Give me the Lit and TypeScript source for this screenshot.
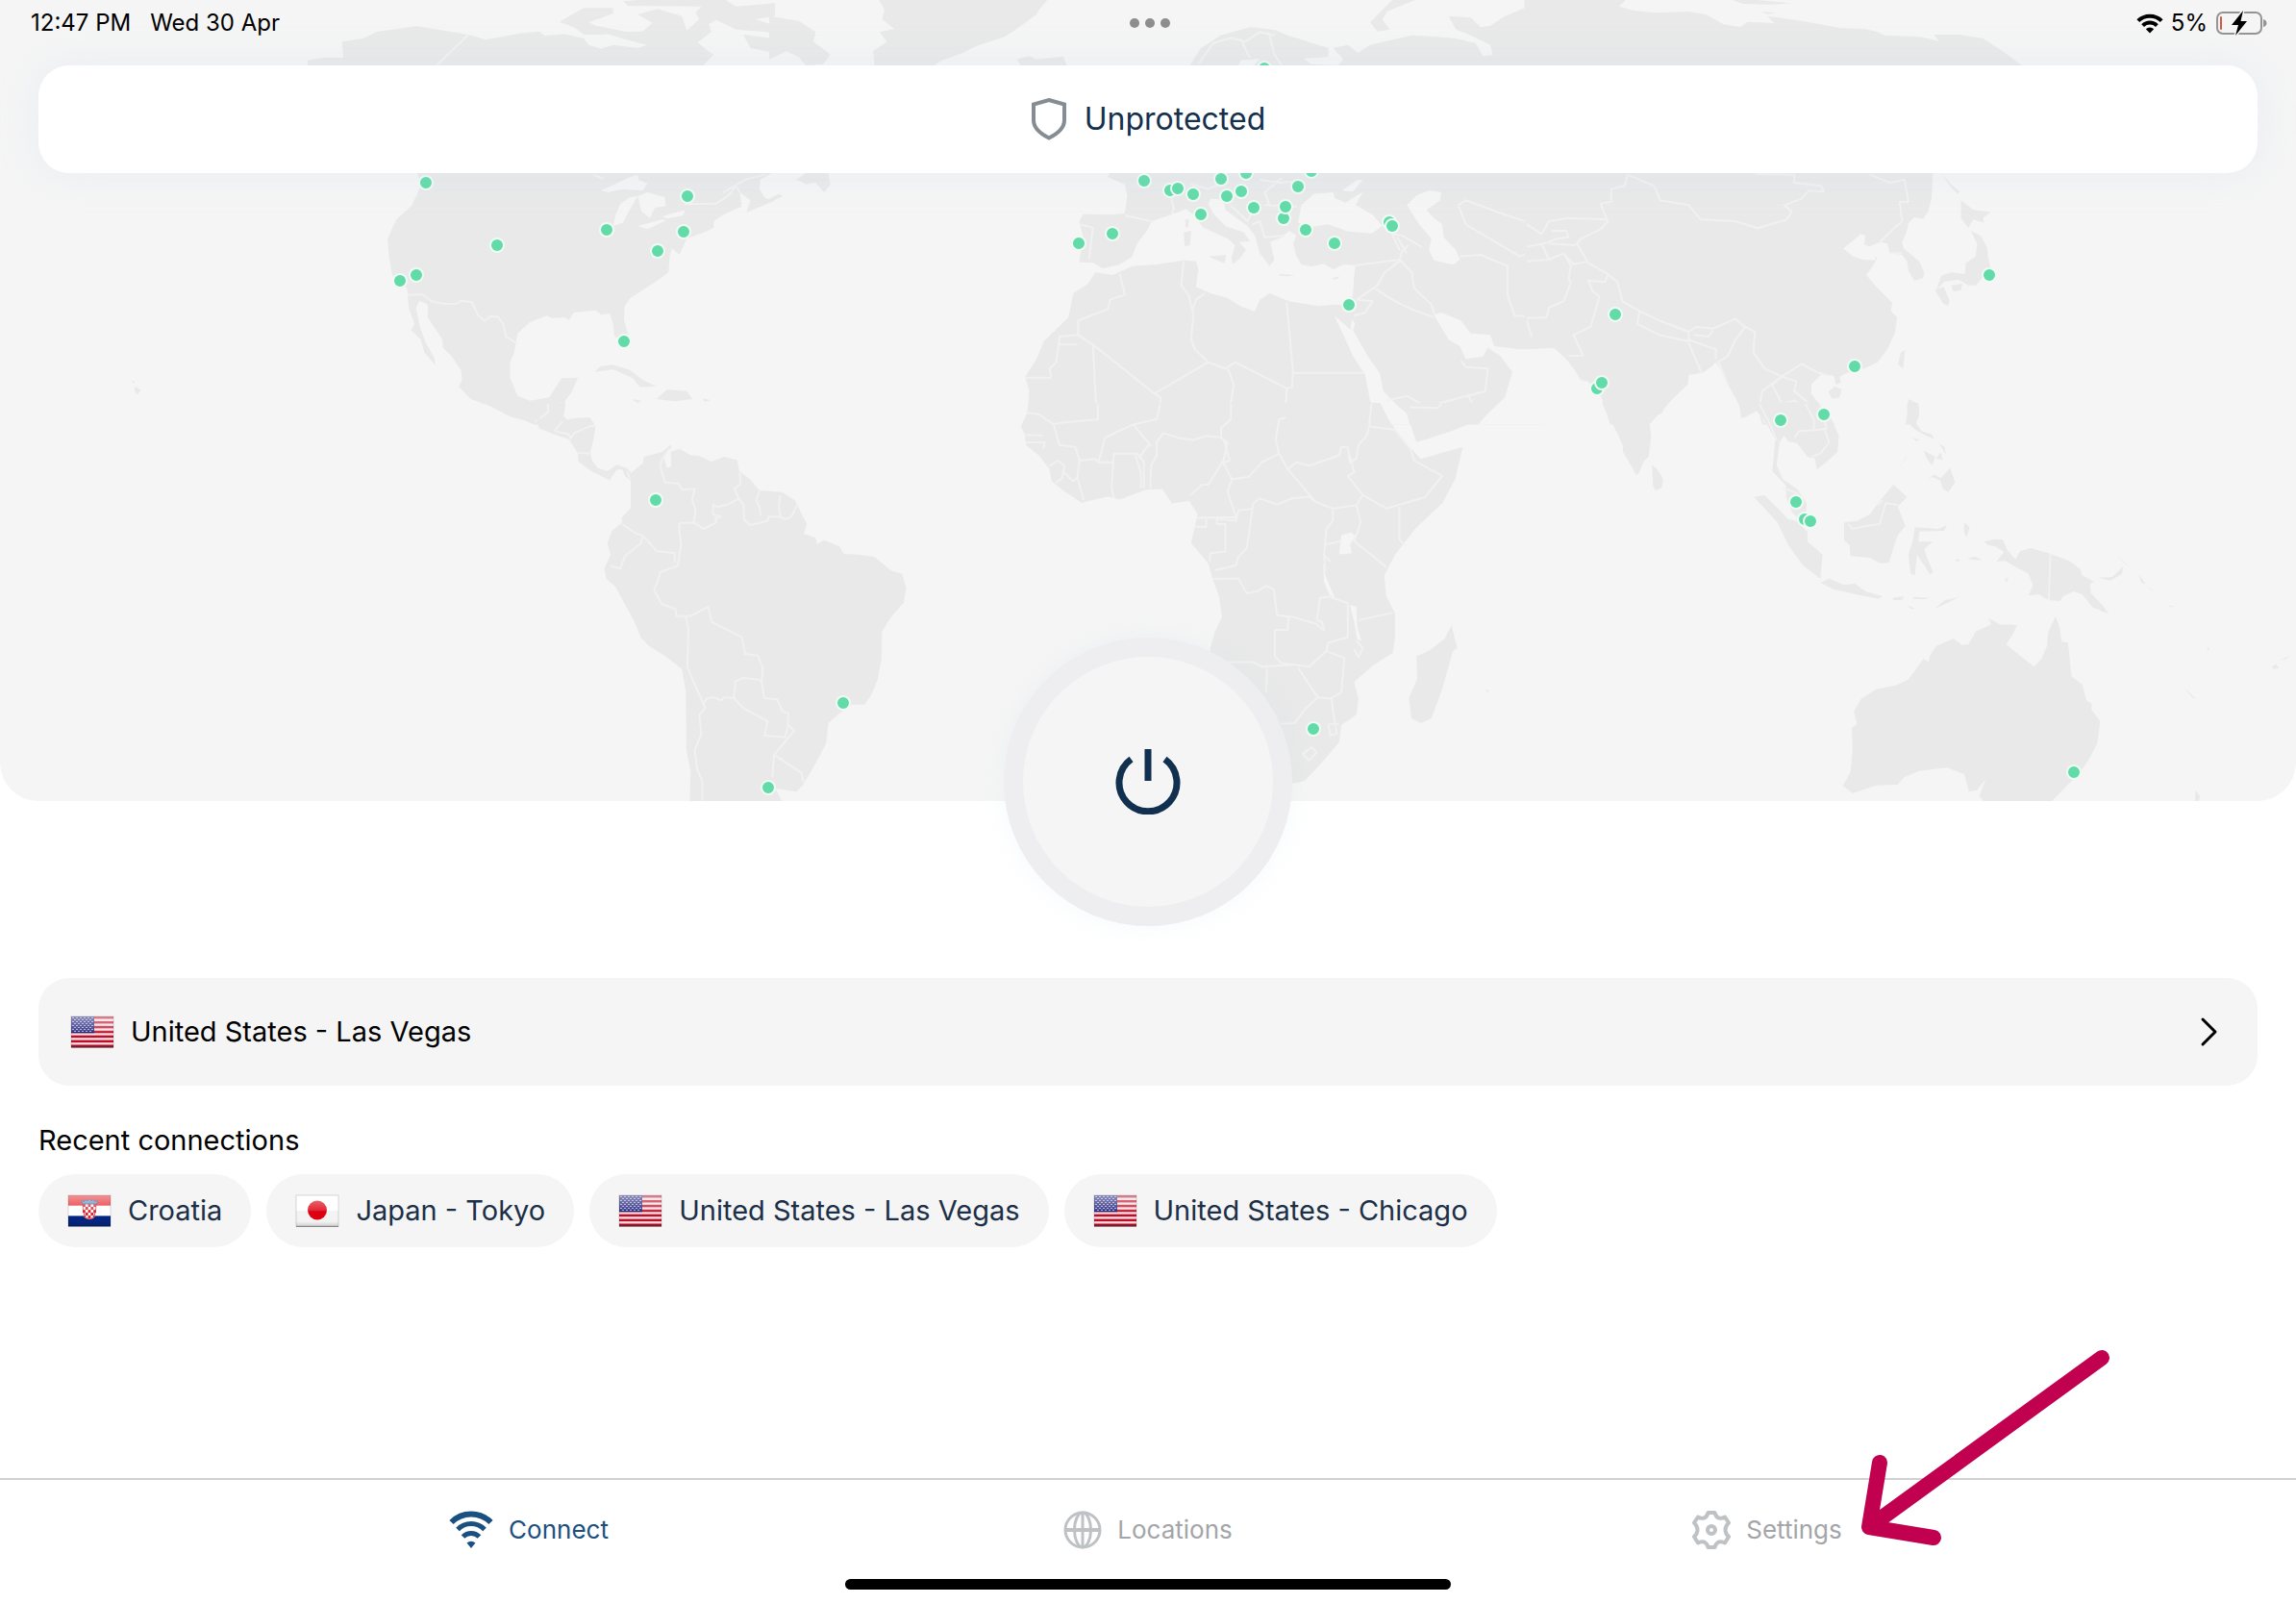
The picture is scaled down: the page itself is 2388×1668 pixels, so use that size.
import { LitElement, html, css, svg, nothing } from "lit";
import { customElement, property, state } from "lit/decorators.js";

type FlagCode = "us" | "hr" | "jp";

interface Place {
  flag: FlagCode;
  name: string;
}

interface Sheet {
  transform: string;
  land: string;
  water: string;
  borders: string;
}

/* The world map is stored as six sheets, each in its own units. */
const SHEETS: Sheet[] = [
  {
    transform: "scale(.5102 .3333)",
    land: `M627,210L627,188 660,180 700,180 697,130 740,120 770,98 850,82 905,95 955,108 990,124 1060,104 1100,98 1110,112 1150,106 1190,120 1200,140 1225,152 1250,140 1300,150 1330,134 1370,148 1420,130 1440,155 1455,170 1430,210Z
      M1140,68L1190,25 1250,25 1250,42 1200,70 1215,80 1275,98 1230,108 1190,108 1170,85Z
      M1225,100L1310,98 1330,72 1300,45 1340,28 1390,50 1400,95 1425,60 1418,38 1430,20 1280,18 1270,4 1300,0 1480,0 1500,20 1580,10 1580,50 1540,60 1580,80 1580,102 1500,92 1460,62 1445,75 1450,100 1420,135 1390,150 1330,145 1280,125Z
      M1515,108L1580,120 1580,165 1530,150Z
      M850,535L858,580 840,640 808,685 790,745 793,800 800,860 830,900 833,960 845,1010 838,1030 858,1060 865,1100 888,1140 885,1115 868,1070 856,1020 848,960 855,938 872,950 872,990 885,1020 902,1060 903,1085 920,1110 940,1155 942,1185 935,1205 960,1245 1000,1268 1040,1300 1065,1310 1090,1325 1212,1325 1195,1305 1155,1310 1145,1290 1152,1250 1165,1225 1178,1178 1145,1180 1130,1215 1120,1240 1080,1250 1055,1235 1040,1180 1040,1130 1048,1100 1055,1040 1080,1005 1115,985 1125,992 1150,990 1160,998 1170,975 1215,968 1225,982 1243,978 1250,1010 1252,1045 1270,1080 1282,1070 1280,1040 1272,1000 1273,955 1285,930 1310,905 1345,870 1363,850 1365,800 1370,775 1385,795 1400,745 1440,722 1455,710 1455,690 1480,665 1512,645 1508,600 1530,625 1522,662 1550,645 1580,625 1560,618 1548,590 1550,560 1580,535Z
      M1212,1160L1225,1142 1250,1138 1285,1155 1310,1185 1338,1205 1305,1208 1290,1180 1250,1152Z
      M1338,1245L1360,1215 1400,1220 1412,1245 1375,1252Z
      M1288,1245L1308,1250 1300,1258Z M1433,1243L1448,1248 1436,1254Z
      M276,1205L287,1217 279,1232 274,1217Z M268,1186L276,1192 271,1196Z`,
    water: `M1225,595L1280,555 1300,545 1302,562 1320,572 1310,595 1270,590 1240,600Z
      M1250,705L1255,670 1265,635 1285,615 1300,612 1285,650 1270,695Z
      M1300,612L1320,600 1355,615 1357,643 1335,648 1325,680 1308,660Z
      M1300,705L1350,685 1358,688 1320,715Z M1350,675L1397,655 1392,673 1360,682Z`,
    borders: `M830,920L860,918 880,940 905,948 930,948 940,938 962,942 975,985 988,1000 1000,987 1015,988 1025,1010 1032,1050 1055,1073
      M955,108L890,204 M1210,545L1230,558 M1395,637L1460,635 1485,610 1500,580 1508,600 M1475,600L1520,560 1560,545
      M1090,1315L1115,1290 1118,1262 1145,1258 M1105,1320L1120,1300 1145,1292`,
  },
  {
    transform: "translate(800 0) scale(.5102 .3333)",
    land: `M222,-5L570,-5 550,30 545,45 500,95 480,115 420,145 395,165 350,190 330,210 215,210 212,160 240,130 225,100 255,90 230,60 235,30Z
      M0,50L60,65 95,100 90,130 125,170 110,200 75,204 60,178 35,160 0,185Z
      M505,185L530,175 545,185 600,176 608,210 515,210Z
      M855,210L880,150 920,110 980,85 1030,93 1060,112 1140,150 1140,178 1090,182 1105,200 1160,204 1170,185 1150,150 1180,140 1200,165 1225,140 1310,110 1360,115 1400,120 1440,135 1455,175 1475,172 1470,140 1430,110 1400,92 1385,50 1430,55 1450,85 1470,80 1500,50 1580,0 1580,210Z
      M1225,70L1270,0 1325,-5 1260,35 1250,60 1265,92 1240,98Z
      M695,535L690,552 725,575 730,610 725,665 700,670 640,668 632,690 640,740 632,818 660,820 680,838 715,825 740,800 750,760 770,720 780,690 815,672 850,652 865,670 885,710 935,745 950,765 942,805 945,825 960,805 972,780 958,755 980,752 968,725 930,705 905,665 895,635 900,620 925,622 930,655 975,705 990,735 1000,790 1020,830 1030,810 1025,780 1022,755 1045,740 1060,720 1075,735 1068,760 1075,800 1085,825 1105,832 1130,823 1150,840 1172,825 1195,828 1192,870 1190,920 1180,955 1182,1325 1580,1325 1580,535Z
      M895,800L932,795 928,822Z M845,725L860,720 858,765 847,768Z M848,685L856,685 854,712 849,708Z
      M1040,855L1072,858 1060,862 1040,860Z M1145,868L1165,862 1155,872Z
      M55,560L75,540 120,540 125,575 112,600 95,570 75,575Z M0,620L20,605 28,612 0,632Z
      M1185,952L1150,950 1120,955 1060,940 1020,915 1000,935 990,972 960,955 935,930 900,915 870,895 875,840 870,815 845,812 790,825 740,830 700,858 665,850 650,885 620,915 610,990 580,1035 560,1065 545,1120 522,1175 530,1220 525,1325 1320,1325 1240,1100Z`,
    water: `M955,210L962,188 1000,183 985,210Z
      M1078,695L1085,640 1110,605 1150,600 1153,618 1175,632 1195,612 1210,600 1195,640 1230,670 1250,705 1228,728 1180,722 1140,700 1105,708Z
      M1168,595L1200,560 1210,562 1190,598Z
      M1300,640L1320,610 1345,593 1370,600 1368,625 1340,655 1355,680 1372,700 1375,740 1400,780 1408,810 1395,826 1355,812 1345,780 1350,745 1325,700Z
      M1152,985L1172,1010 1185,1028 1188,995 1194,1010 1190,1030 1220,1110 1245,1165 1252,1220 1280,1265 1300,1290 1306,1325 1258,1325 1225,1250 1215,1170 1190,1110 1175,1060Z
      M1355,982L1370,975 1410,1000 1430,1040 1470,1045 1478,1080 1530,1090 1580,1085 1580,1325 1445,1325 1465,1290 1500,1240 1515,1160 1490,1110 1465,1085 1455,1112 1420,1120 1408,1080 1385,1060Z`,
    borders: `M715,855L725,920 695,935 690,965 630,1000 630,1045 592,1050 590,1075 628,1075 M630,1045L660,1075 785,1228 895,1130 868,1090 860,1060 865,980 855,920 840,890 845,815 M888,915L870,935 862,970
      M575,1178L524,1178 M590,1075L585,1130 572,1150 575,1178 M660,1075L668,1310 610,1320 M785,1228L798,1240 795,1300 765,1320
      M895,1130L930,1150 950,1130 1055,1212 1052,1320 M935,1150L947,1200 942,1250 915,1320 M1055,945L1068,1163 1215,1163 M1068,1163L1066,1208 1055,1212
      M632,700L660,710 652,810 M725,672L785,692 M820,672L825,650 820,620 M1000,560L1040,570 1078,565 M1045,555L1010,600 1020,640 M1010,640L1075,645
      M985,700L1000,690 1010,740 1050,735 M940,640L975,690 985,660 M860,575L895,590 920,575 M1285,780L1270,730 1290,735 1330,770 M1280,740L1300,790
      M1195,828L1285,810 1290,785 1302,765 M1285,810L1310,850 1315,900 1350,950 1357,985 M1285,815L1255,850 1240,890 1198,935 M1235,900L1270,935 1310,965 1355,990 M1192,985L1215,975 1230,940 1198,935
      M1408,800L1450,795 1505,830 1505,920 1520,985 1568,990 M1405,640L1420,625 1500,670 1560,700 M1405,640L1420,700 1530,800 1568,780 M1258,1250L1300,1235 1340,1270 1410,1240 1460,1220 M1410,1125L1420,1145 1465,1150 1460,1220 1425,1235 1440,1275
      M875,200L905,135 940,118 970,130 1000,100 1030,110 M960,120L980,180 M1018,100L1030,170 1045,204`,
  },
  {
    transform: "translate(1588 0) scale(.5102 .3333)",
    land: `M-5,-5L205,-5 188,20 215,32 260,40 330,36 365,45 400,75 435,85 450,68 505,72 490,50 560,65 640,88 690,90 715,100 730,110 800,115 840,128 830,108 880,108 930,120 970,160 1015,210 -5,210Z
      M420,0L470,0 540,10 500,14 440,12Z M478,36L508,40 490,44Z
      M-5,535L828,535 825,620 818,660 808,683 790,678 778,695 775,720 765,755 768,775 800,815 810,850 808,868 790,875 778,845 775,815 765,795 740,790 735,760 720,755 700,768 690,790 715,805 705,830 692,858 710,890 745,945 742,970 755,990 750,1040 735,1090 715,1130 690,1148 650,1165 638,1175 640,1195 630,1200 626,1172 600,1168 580,1200 580,1230 600,1268 628,1325 480,1325 472,1280 440,1305 432,1260 410,1200 398,1160 385,1130 375,1145 360,1162 330,1170 328,1200 300,1240 270,1290 250,1325 170,1325 150,1230 125,1190 110,1185 98,1155 80,1120 55,1085 -5,1090Z
      M885,625L910,655 945,662 930,680 932,695 910,685 900,712 885,680Z M905,720L925,735 938,770 940,800 948,850 930,865 915,890 900,890 880,872 850,880 835,905 845,860 865,850 893,855 895,820 915,800 918,760Z
      M832,905L850,895 862,940 858,955 848,945Z M865,890L888,885 885,905 870,910Z M845,540L865,575 882,598 878,605 862,580Z
      M762,1100L771,1092 767,1150 757,1138Z M615,1222L628,1205 642,1215 637,1240 622,1244Z M778,1245L798,1260 800,1290 790,1325 772,1325 776,1290Z`,
    water: `M645,775L670,745 680,730 690,735 688,762 705,775 712,812 685,810 665,800Z`,
    borders: `M205,545L260,580 272,625 330,640 355,685 425,690 470,712 530,685 540,660 525,640 560,620 575,595 605,598 600,580 545,570 545,545 465,542
      M205,545L200,580 172,590 172,630 150,635 165,690 150,715 110,745 102,760 125,820 160,850 185,880 195,940 230,970 225,1010 270,1045 330,1065 330,1035 270,1000 230,970 M330,1035L345,1020 380,1025 425,995 445,1020 465,1035 462,1100 485,1150 520,1175 560,1135 590,1160 610,1170
      M700,545L740,570 770,560 778,630 760,630 765,690 750,710 720,755 M738,790L765,790 M0,700L30,730 45,690 85,680 165,685 M45,760L100,765 M50,720L80,720 85,740 60,745 35,760 0,770
      M30,760L45,810 0,815 M45,810L75,790 90,830 85,870 90,880 75,940 45,960 40,990 0,992 M75,790L95,825 125,815 M165,855L160,880 125,875 135,910 148,925 130,1020 95,1045 115,1110 85,1110 M0,1000L10,1050 M330,1070L355,1160 M330,1060L385,1090 385,1120 M380,1030L370,1050 340,1045 M445,1020L425,1060 410,1110 390,1130 410,1200
      M520,1175L480,1220 475,1260 485,1320 M520,1175L500,1200 520,1260 545,1250 565,1265 570,1320 M520,1175L550,1190 545,1220 580,1265 600,1320`,
  },
  {
    transform: "translate(560 420) scale(.3333)",
    land: `M-5,-3L85,-3 80,30 70,55 110,45 160,42 178,70 172,110 162,152 168,178 185,200 215,210 245,190 275,200 290,215 325,185 330,165 385,150 412,128 415,135 392,165 400,200 415,195 412,150 440,140 475,160 500,162 540,180 580,165 620,175 627,210 660,235 690,270 760,275 800,300 820,340 838,375 828,405 865,418 870,438 890,425 940,445 952,468 1000,470 1050,478 1100,520 1135,530 1148,575 1140,620 1100,665 1072,710 1070,800 1058,860 1040,905 1018,938 980,938 940,965 905,995 898,1060 860,1130 825,1190 805,1210 740,1200 762,1245 472,1245 475,1150 462,1080 460,900 448,828 400,790 345,755 320,730 300,680 240,570 212,545 205,515 225,470 215,435 230,395 262,370 260,355 288,325 288,240 270,225 262,205 245,205 222,238 165,210 125,180 122,152 95,110 50,95 5,78 -5,60Z`,
    water: ``,
    borders: `M5,45L30,25 30,0 M50,85L75,55 M50,85L95,95 100,108 110,92 160,70 178,68 M122,152L160,155 M285,235L278,210
      M408,140L385,175 380,195 395,245 435,248 450,268 488,265 480,300 490,330 485,370 515,390 555,370 552,358 570,352 545,345 545,315 560,322 595,312 625,295 612,265 630,250 628,215
      M625,295L640,315 642,360 660,378 715,365 718,352 750,352 775,360 790,350 810,310 M690,272L680,300 690,325 695,350 M755,285L750,320 755,352
      M485,370L440,372 440,395 445,440 435,505 380,525 372,555 360,580 385,625 428,640 430,662 475,662 530,633 540,680 590,705 635,728 645,780 685,785 700,825 697,870 705,918 745,922 762,960 780,965 778,1000 798,1020 735,1095 820,1150 828,1180 M735,1095L730,1165
      M262,375L300,402 325,410 320,435 270,475 255,515 225,505 M325,410L370,460 425,465 425,495 M460,665L468,700 465,820 485,870 515,935 525,920 545,915 570,925 580,915 610,918 615,865 640,855 690,860 697,870 M610,918L640,950 715,990 705,1035 770,1040 780,1000
      M515,935L520,950 502,970 508,1030 488,1080 495,1140 512,1180 512,1242`,
  },
  {
    transform: "translate(1000 420) scale(.4464 .3571)",
    land: `M158,-3L152,30 138,65 148,90 150,120 180,150 205,190 210,225 240,255 280,288 340,270 370,278 430,250 468,248 490,290 530,282 550,320 545,350 535,405 575,465 585,510 600,560 607,620 590,665 580,710 580,760 720,1110 775,1105 800,1098 850,1030 880,985 885,935 920,905 925,860 915,810 960,760 1005,725 1010,680 1010,610 990,560 985,500 1010,440 1060,360 1120,290 1150,220 1168,125 1070,160 1040,120 1000,55 975,-3Z
      M1030,-3L1060,112 1140,80 1180,60 1185,35 1225,15 1230,-3Z M1142,645L1155,712 1145,720 1120,830 1095,915 1070,930 1048,915 1043,855 1062,800 1060,735 1090,718 1125,685Z M1492,-3L1530,90 1572,210 1572,-3Z
      M1222,830L1230,835 1224,840Z`,
    water: `M885,382L908,374 918,385 905,410 910,435 880,438Z M842,460L848,500 870,565 862,568 845,520Z M905,585L920,590 922,650 932,690 922,685 914,630Z`,
    borders: `M150,25L180,30 215,60 230,55 318,45 318,0 M215,60L228,120 265,125 275,165 310,160 320,170 355,170 M150,90L190,92 M150,112L195,112 190,130 M205,180L225,165 240,180 235,215 220,230 M240,200L260,225 270,215 275,165 M270,215L285,280 M355,145L350,245 355,275 M355,145L410,145 415,155 432,125 440,120 400,60 365,80 335,98 320,165 M400,60L455,45 463,0 M405,150L418,200 418,245 M425,245L425,170 410,145 M440,245L442,180 455,150 455,110 470,85 510,100 540,105 570,93 605,98 620,115 610,165 575,235 560,235 535,265
      M605,98L605,70 628,45 628,0 M610,100L625,165 610,170 630,220 620,255 640,330 548,332 M630,220L670,212 700,170 740,145 732,105 740,45 755,40 M740,145L760,190 825,285 810,270 770,275 735,293 695,275 680,290 678,305 645,310 640,340 595,335 595,350 615,350 615,430 580,435 578,460 M545,358L570,358 570,335
      M760,190L780,170 810,180 880,150 885,125 900,125 905,170 920,160 925,120 945,90 950,65 975,70 1010,75 1045,130 1055,165 1120,210 1080,272 1030,290 990,305 935,265 900,210 915,200 905,150 M950,65L955,0 M1020,300L1020,395 1035,412 M825,285L865,305 920,295 935,265 M920,295L930,345 915,400 990,475 M865,305L865,340 850,365 845,440 848,490 M845,410L885,400 M845,440L860,460
      M678,305L665,420 645,445 640,470 590,485 M585,510L645,508 665,552 690,545 710,530 728,540 735,615 770,620 825,640 845,660 840,635 828,630 835,565 865,560 M735,615L762,620 760,658 730,658 730,735 745,755 810,765 850,720 892,740 885,840 860,858 830,855 785,770 M865,565L900,580 900,680 855,695 850,720 M925,630L1005,608 M920,690L935,710 925,738 915,715
      M620,752L680,752 700,765 770,760 M712,770L710,840 M830,855L800,890 775,930 745,932 M862,858L870,930 880,935 M855,935L870,930 875,960 860,965Z M795,1020L815,1000 828,1015 810,1038Z M1045,10L1110,12 1118,0`,
  },
  {
    transform: "translate(1688 420) scale(.4464 .3333)",
    land: `M-3,-3L105,-3 90,30 60,42 66,100 60,165 48,180 35,222 20,195 0,150Z M68,190L80,205 94,235 90,262 76,270 70,255Z
      M272,-5L275,45 310,20 330,50 355,110 348,210 380,255 380,290 395,340 425,378 428,310 405,265 372,235 358,190 365,120 375,98 385,118 405,122 430,165 447,170 452,205 475,180 500,150 503,100 485,45 455,-5Z
      M305,290L330,285 360,325 385,360 405,365 430,400 430,430 465,470 460,545 420,505 385,440 360,370Z M460,558L480,545 515,565 540,560 565,585 605,600 595,608 545,595 490,578Z
      M515,370L545,365 575,345 600,300 630,252 662,290 640,320 658,380 640,410 630,450 620,495 600,498 575,480 530,475 528,440 515,425Z
      M680,385L735,390 755,378 748,396 690,398 688,430 722,430 702,452 710,485 723,525 715,532 700,500 685,470 680,535 670,530 665,470 675,430Z
      M795,370L808,385 800,418 795,400Z M628,605L655,600 650,612 630,612Z M675,602L715,605 700,610 678,608Z M725,640L750,612 782,603 745,628Z M660,628L680,638 672,640Z M773,486L785,484 780,494Z M802,482L820,476 838,488 815,486Z M890,545L898,542 893,560Z
      M662,-3L688,-3 690,35 683,60 695,85 720,95 725,110 700,95 675,75 663,50Z M640,208L662,160 658,172Z M675,105L690,112 684,118Z M735,122L750,135 752,158 745,140Z M700,145L728,165 720,192 708,170Z M740,150L745,175 730,170Z M706,240L725,220 740,232 762,200 774,245 758,275 745,265 740,240 720,228Z
      M842,430L865,422 885,424 895,455 915,485 925,460 950,450 990,465 1040,490 1065,515 1070,535 1098,555 1088,562 1090,590 1115,625 1132,655 1095,635 1070,595 1050,585 1025,600 1018,615 990,612 970,595 945,598 955,565 945,530 890,490 870,492 888,462 868,445 850,440Z
      M1108,542L1140,540 1165,508 1163,530 1135,552Z M1150,470L1178,508 1170,500Z M1202,532L1218,562 1208,558Z M1222,570L1240,585 1230,580Z M1272,628L1286,634 1275,634Z M1303,880L1335,920 1328,918Z M1512,820L1522,812 1528,824 1516,827Z M1530,800L1555,785 1545,796Z M1360,760L1368,765 1362,768Z
      M852,668L878,688 918,690 910,715 893,750 920,780 958,820 975,795 988,755 990,715 1008,662 1018,700 1022,742 1037,745 1045,850 1070,875 1080,925 1092,935 1092,955 1112,990 1105,1060 1085,1110 1070,1140 1050,1170 995,1245 845,1245 830,1225 845,1170 825,1205 805,1210 803,1190 795,1155 755,1135 690,1145 655,1165 640,1188 590,1190 535,1215 512,1192 530,1150 535,1080 533,1010 545,1000 538,960 555,920 590,890 635,878 665,860 700,795 712,805 715,785 730,755 770,732 790,752 805,750 822,710 858,688Z
      M1333,1205L1345,1225 1338,1245 1333,1245Z`,
    water: ``,
    borders: `M318,0L345,70 358,115 M400,105L410,85 450,82 470,78 480,120 460,155 440,165 M425,0L445,50 445,80 M460,0L475,80 M525,375L535,390 570,380 598,375 612,310 640,315 M595,315L605,300 M996,468L992,612 M372,262L408,280`,
  },
];

/* Server positions on the map, in map units. */
const PINS: [number, number][] = [
  [443, 190], [715, 204], [631, 239], [711, 241], [517, 255], [684, 261], [416, 292], [433, 286], [649, 355],
  [1315, 71], [1190, 188], [1217, 198], [1225, 196], [1241, 202], [1270, 186], [1296, 180], [1276, 204], [1291, 199],
  [1304, 216], [1249, 223], [1350, 194], [1364, 178], [1335, 227], [1337, 215], [1358, 239], [1388, 253], [1157, 243],
  [1122, 253], [1445, 231], [1448, 235], [1403, 317], [2069, 286], [1680, 327], [1661, 404], [1666, 398], [1929, 381],
  [1897, 431], [1852, 437], [682, 520], [877, 731], [799, 819], [1366, 758], [1868, 522], [1877, 540], [1883, 542],
  [2157, 803],
];

@customElement("world-map")
class WorldMap extends LitElement {
  static styles = css`
    :host { display: block; }
    .map { display: block; width: 100%; height: auto; }
    .land { fill: #e9e9e9; }
    .water { fill: #f5f5f5; }
    .border { fill: none; stroke: #f1f1f1; stroke-width: 2; stroke-linejoin: round; vector-effect: non-scaling-stroke; }
    .pin { fill: #62dba8; stroke: #effbf5; stroke-width: 2; }
  `;

  render() {
    return html`
      <svg class="map" viewBox="0 0 2388 833" role="img" aria-label="Server map">
        ${SHEETS.map(
          (s) => svg`<g transform=${s.transform}>
            <path class="land" d=${s.land}></path>
            ${s.water ? svg`<path class="water" d=${s.water}></path>` : nothing}
            <path class="border" d=${s.borders}></path>
          </g>`,
        )}
        ${PINS.map(([x, y]) => svg`<circle class="pin" cx=${x} cy=${y} r="7"></circle>`)}
      </svg>
    `;
  }
}

@customElement("country-flag")
class CountryFlag extends LitElement {
  @property() code: FlagCode = "us";

  static styles = css`
    :host { display: block; flex: none; }
    .flag { display: block; width: 46px; height: 34px; }
  `;

  private us() {
    const stars = [];
    for (let row = 0; row < 8; row++) {
      for (let col = 0; col < 6; col++) {
        const x = 3 + col * 4 + (row % 2 ? 2 : 0);
        if (x < 24) stars.push(svg`<circle cx=${x} cy=${2.4 + row * 2} r=".7" fill="#fff"></circle>`);
      }
    }
    return svg`
      <rect x="1" y="1" width="44" height="32" fill="#fbdfe2"></rect>
      ${[0, 1, 2, 3, 4, 5, 6].map(
        (i) => svg`<rect x="1" y=${1 + i * 4.92} width="44" height="2.5" fill="#b90f2a"></rect>`,
      )}
      <rect x="1" y="1" width="24" height="17.2" fill="#1b1c78"></rect>
      ${stars}`;
  }

  private hr() {
    const checks = [];
    for (let row = 0; row < 5; row++) {
      for (let col = 0; col < 5; col++) {
        if ((row + col) % 2 === 0) {
          checks.push(svg`<rect x=${16 + col * 2.8} y=${10 + row * 3} width="2.8" height="3" fill="#e0202a"></rect>`);
        }
      }
    }
    return svg`
      <rect x="1" y="1" width="44" height="32" fill="#fff"></rect>
      <rect x="1" y="1" width="44" height="10.7" fill="#e8262c"></rect>
      <rect x="1" y="22.4" width="44" height="10.6" fill="#04247f"></rect>
      <clipPath id="crest"><path d="M16 10H30V18Q30 25 23 26Q16 25 16 18Z"></path></clipPath>
      <g clip-path="url(#crest)"><rect x="16" y="10" width="14" height="16" fill="#fff"></rect>${checks}</g>
      <path d="M16 10Q16 25 23 26Q30 25 30 10" fill="none" stroke="#e0202a" stroke-width=".8"></path>
      <path d="M15.5 10L14.5 6.5 17.5 7.5 19 5.5 21 7 23 5 25 7 27 5.500 28.5 7.500 31.500 6.500 30.500 10Z" fill="#5f8fc4" stroke="#3a4e83" stroke-width=".8"></path>`;
  }

  private jp() {
    return svg`
      <rect x="1" y="1" width="44" height="32" fill="#fff"></rect>
      <rect x="1" y="17" width="44" height="16" fill="#f3f3f3"></rect>
      <circle cx="23" cy="16.500" r="10" fill="#dc0010"></circle>`;
  }

  render() {
    const art = this.code === "us" ? this.us() : this.code === "hr" ? this.hr() : this.jp();
    return html`
      <svg class="flag" viewBox="0 0 46 34" aria-hidden="true">
        <defs>
          <linearGradient id="gloss" x1="0" y1="0" x2="0" y2="1">
            <stop offset="0" stop-color="#fff" stop-opacity=".5"></stop>
            <stop offset=".5" stop-color="#fff" stop-opacity=".15"></stop>
            <stop offset=".52" stop-color="#fff" stop-opacity="0"></stop>
            <stop offset=".85" stop-color="#000" stop-opacity="0"></stop>
            <stop offset="1" stop-color="#000" stop-opacity=".14"></stop>
          </linearGradient>
        </defs>
        ${art}
        <rect x="1" y="1" width="44" height="32" fill="url(#gloss)"></rect>
        <rect x="1" y="1" width="44" height="32" fill="none" stroke="#000" stroke-opacity=".14"></rect>
        <path d="M1 33.500H45" stroke="#000" stroke-opacity=".4"></path>
      </svg>
    `;
  }
}

const wifiIcon = html`<svg class="status-wifi" viewBox="0 0 28 21" aria-hidden="true">
  <g fill="none" stroke="#000" stroke-width="4">
    <path d="M1.800 7.600A17.500 17.500 0 0 1 26.200 7.600"></path>
    <path d="M6.600 12.600A10.500 10.500 0 0 1 21.400 12.600"></path>
  </g>
  <path d="M9.800 16.200A6 6 0 0 1 18.200 16.200L14 20.600Z"></path>
</svg>`;

const batteryIcon = html`<svg class="battery" viewBox="0 0 56 26" aria-hidden="true">
  <rect x="2" y="2" width="46" height="22" rx="6" fill="none" stroke="#949494" stroke-width="2"></rect>
  <path d="M50 9Q53.500 10 53.500 13Q53.500 16 50 17Z" fill="#949494"></path>
  <rect x="5" y="6" width="2" height="14" rx="1" fill="#d9564a"></rect>
  <path d="M29 0L17 15H24L21 26L33 11H26.500Z" fill="#000" stroke="#f5f5f5" stroke-width="3" paint-order="stroke" stroke-linejoin="round"></path>
</svg>`;

const shieldIcon = html`<svg class="shield" viewBox="0 0 38 44" aria-hidden="true">
  <path d="M19 2L35 6.500V23C35 32 26 38 19 41.500C12 38 3 32 3 23V6.500Z" fill="none" stroke="#868c93" stroke-width="4"></path>
</svg>`;

const powerIcon = html`<svg class="power-icon" viewBox="0 0 68 68" aria-hidden="true">
  <g fill="none" stroke="#112f4e" stroke-width="7">
    <path d="M16.500 10.500A30 30 0 1 0 51.500 10.500"></path>
    <path d="M34 0V33"></path>
  </g>
</svg>`;

const connectIcon = html`<svg class="tab-icon" viewBox="0 0 46 40" aria-hidden="true">
  <g fill="none" stroke="currentColor" stroke-width="6">
    <path d="M2.500 12A29 29 0 0 1 43.500 12"></path>
    <path d="M9 19.500A19.500 19.500 0 0 1 37 19.500" stroke-width="5"></path>
    <path d="M14.500 27A12 12 0 0 1 31.500 27" stroke-width="5"></path>
  </g>
  <path d="M18.500 33.500Q23 30 27.500 33.500L23 39Z" fill="currentColor"></path>
</svg>`;

const globeIcon = html`<svg class="tab-icon round" viewBox="0 0 40 40" aria-hidden="true">
  <g fill="none" stroke="#bfc2c5" stroke-width="3">
    <circle cx="20" cy="20" r="18"></circle>
    <ellipse cx="20" cy="20" rx="8.500" ry="18"></ellipse>
    <path d="M20 2V38"></path>
    <path d="M2 20H38" stroke-width="4"></path>
  </g>
</svg>`;

const gearIcon = html`<svg class="tab-icon round" viewBox="0 0 40 40" aria-hidden="true">
  <g fill="none" stroke="#bfc2c5" stroke-width="4" stroke-linejoin="round">
    <path d="M16.500 2H23.500Q24.500 6.500 27.500 7.500Q31 8.500 34 6.500L38 12.500Q34.500 16 34.500 20Q34.500 24 38 27L34 33.500Q31 31.500 27.500 32.500Q24.500 34 23.500 38H16.500Q15.500 34 12.500 32.500Q9 31.500 6 33.500L2 27Q5.500 24 5.500 20Q5.500 16 2 12.500L6 6.500Q9 8.500 12.500 7.500Q15.500 6.500 16.500 2Z"></path>
    <circle cx="20" cy="20" r="4"></circle>
  </g>
</svg>`;

const TABS = [
  { id: "connect", label: "Connect", icon: connectIcon },
  { id: "locations", label: "Locations", icon: globeIcon },
  { id: "settings", label: "Settings", icon: gearIcon },
];

@customElement("app-root")
class AppRoot extends LitElement {
  @state() private tab = "connect";

  private recents: Place[] = [
    { flag: "hr", name: "Croatia" },
    { flag: "jp", name: "Japan - Tokyo" },
    { flag: "us", name: "United States - Las Vegas" },
    { flag: "us", name: "United States - Chicago" },
  ];

  static styles = css`
    :host {
      display: flex;
      flex-direction: column;
      min-height: 100vh;
      background: #fff;
      color: #000;
      font-family: Inter, "Liberation Sans", sans-serif;
      font-size: 29px;
      line-height: 36px;
    }
    * { box-sizing: border-box; }
    button { font: inherit; color: inherit; border: 0; margin: 0; cursor: pointer; }
    svg { flex: none; }

    .hero {
      display: grid;
      background: #f5f5f5;
      border-radius: 0 0 40px 40px;
      overflow: hidden;
    }
    .hero > * { grid-area: 1 / 1; }
    .overlay { position: relative; }

    .status {
      display: grid;
      grid-template-columns: 1fr auto 1fr;
      align-items: center;
      height: 48px;
      padding: 0 28px 0 32px;
      font-size: 24px;
      line-height: 28px;
    }
    .clock { display: flex; gap: 20px; }
    .dots { display: flex; gap: 6px; padding: 0; background: none; }
    .dot { width: 10px; height: 10px; border-radius: 50%; background: #8e8e8e; }
    .indicators { display: flex; justify-content: flex-end; align-items: center; gap: 8px; }
    .status-wifi { width: 28px; height: 21px; }
    .battery { width: 56px; height: 26px; }

    .card {
      display: flex;
      align-items: center;
      justify-content: center;
      gap: 18px;
      height: 112px;
      margin: 20px 40px 0;
      border-radius: 32px;
      background: #fff;
      box-shadow: 0 0 40px rgba(190, 215, 240, 0.22);
      color: #14304d;
      font-size: 32px;
      line-height: 40px;
    }
    .shield { width: 38px; height: 44px; }

    .power {
      position: relative;
      display: flex;
      align-items: center;
      justify-content: center;
      align-self: center;
      width: 300px;
      height: 300px;
      margin-top: -170px;
      padding: 0;
      border: 20px solid #eeeef0;
      border-radius: 50%;
      background: #f5f5f5;
      box-shadow: 0 0 24px rgba(190, 210, 230, 0.14);
    }
    .power-icon { width: 68px; height: 68px; }

    .panel { display: flex; flex-direction: column; padding: 54px 40px 24px; }
    .location {
      display: flex;
      align-items: center;
      gap: 17px;
      height: 112px;
      padding: 0 40px 0 33px;
      border-radius: 32px;
      background: #f5f5f5;
      text-align: left;
    }
    .location-name { flex: 1; }
    .chevron { width: 20px; height: 32px; }
    .recent-title {
      margin: 39px 0 0;
      font-size: 29px;
      line-height: 36px;
      font-weight: 400;
    }
    .chips { display: flex; flex-wrap: wrap; gap: 16px; margin: 17px 0 0; padding: 0; list-style: none; }
    .chip {
      display: flex;
      align-items: center;
      gap: 17px;
      height: 76px;
      padding: 0 30px;
      border-radius: 38px;
      background: #f5f5f5;
      color: #1b3048;
    }

    .footer {
      position: relative;
      display: flex;
      flex-direction: column;
      align-items: center;
      margin-top: auto;
      padding-bottom: 15px;
      border-top: 2px solid #d0d1d3;
    }
    .tabs { display: flex; align-self: stretch; padding: 0 228px; }
    .tab {
      display: flex;
      flex: 1;
      align-items: center;
      justify-content: center;
      gap: 16px;
      height: 103px;
      padding: 0;
      background: none;
      color: #a3a5a8;
      font-size: 26px;
      line-height: 32px;
    }
    .tab.active { color: #1a5080; }
    .tab-icon { width: 46px; height: 40px; }
    .tab-icon.round { width: 40px; }
    .home-bar { width: 630px; height: 11px; border-radius: 6px; background: #000; }

    .pointer {
      position: absolute;
      right: 190px;
      bottom: 56px;
      width: 264px;
      height: 212px;
      pointer-events: none;
    }
  `;

  render() {
    return html`
      <header class="hero">
        <world-map></world-map>
        <div class="overlay">
          <div class="status">
            <div class="clock"><span>12:47 PM</span><span>Wed 30 Apr</span></div>
            <button class="dots" aria-label="Multitasking">
              <span class="dot"></span><span class="dot"></span><span class="dot"></span>
            </button>
            <div class="indicators">${wifiIcon}<span>5%</span>${batteryIcon}</div>
          </div>
          <div class="card" role="status">${shieldIcon}<span>Unprotected</span></div>
        </div>
      </header>

      <button class="power" aria-label="Connect to VPN">${powerIcon}</button>

      <main class="panel">
        <button class="location">
          <country-flag code="us"></country-flag>
          <span class="location-name">United States - Las Vegas</span>
          <svg class="chevron" viewBox="0 0 20 32" aria-hidden="true">
            <path d="M3 3L16 16L3 29" fill="none" stroke="#000" stroke-width="3" stroke-linecap="round" stroke-linejoin="round"></path>
          </svg>
        </button>
        <h2 class="recent-title">Recent connections</h2>
        <ul class="chips">
          ${this.recents.map(
            (p) => html`<li>
              <button class="chip"><country-flag code=${p.flag}></country-flag><span>${p.name}</span></button>
            </li>`,
          )}
        </ul>
      </main>

      <footer class="footer">
        <nav class="tabs">
          ${TABS.map(
            (t) => html`<button
              class="tab ${t.id === this.tab ? "active" : ""}"
              aria-current=${t.id === this.tab ? "page" : "false"}
              @click=${() => (this.tab = t.id)}
            >${t.icon}<span>${t.label}</span></button>`,
          )}
        </nav>
        <div class="home-bar"></div>
        <svg class="pointer" viewBox="0 0 264 212" aria-hidden="true">
          <path d="M252 12L10 188M21 121L10 188L77 199" fill="none" stroke="#c10050" stroke-width="16" stroke-linecap="round" stroke-linejoin="round"></path>
        </svg>
      </footer>
    `;
  }
}
